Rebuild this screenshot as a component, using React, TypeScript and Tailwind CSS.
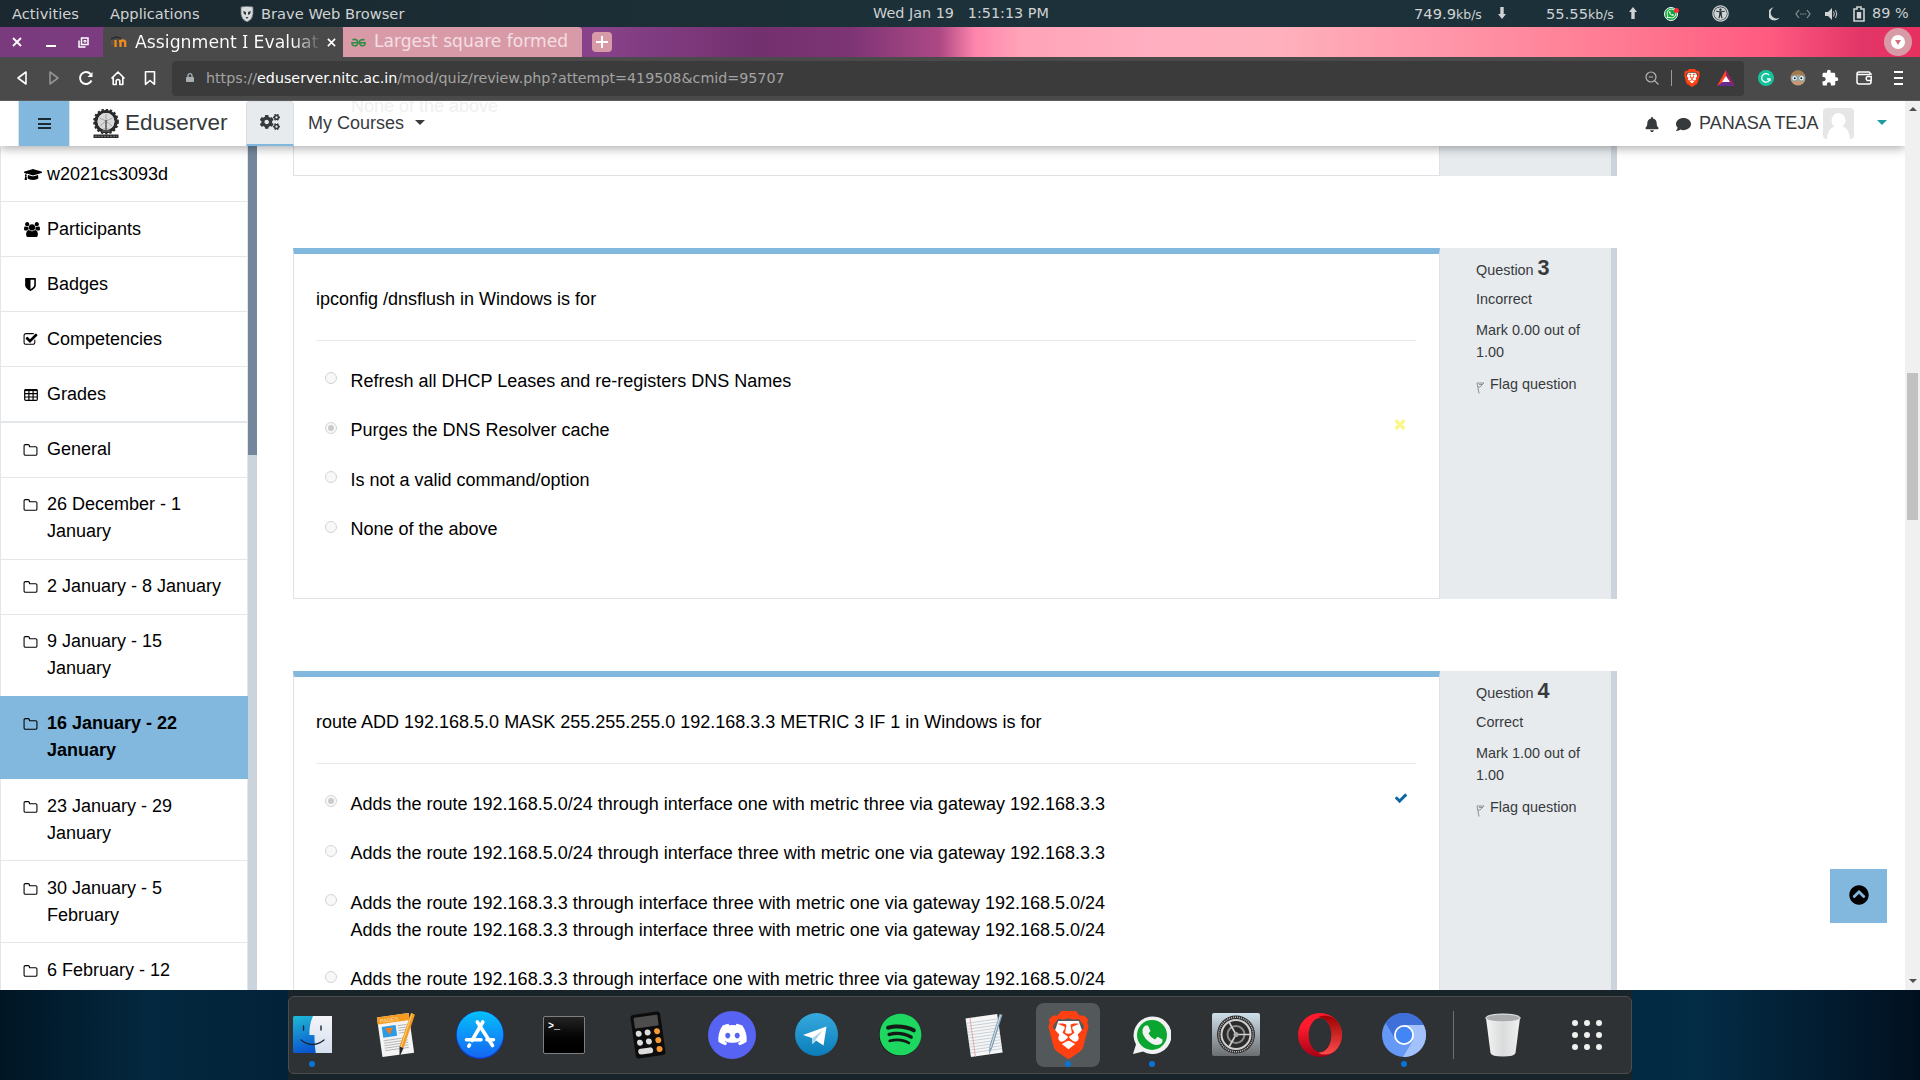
import type { ReactNode } from "react";
import {
  FaBell,
  FaChevronCircleUp,
  FaCogs,
  FaComment,
  FaDiscord,
  FaGraduationCap,
  FaLock,
  FaSpotify,
  FaUniversalAccess,
  FaWhatsapp,
} from "react-icons/fa";
import { MdExtension } from "react-icons/md";
import { SiBrave } from "react-icons/si";

/* ---------- small shared icons ---------- */

const FOLDER =
  "M1600 1312v-704q0-40-28-68t-68-28h-704q-40 0-68-28t-28-68v-64q0-40-28-68t-68-28h-320q-40 0-68 28t-28 68v960q0 40 28 68t68 28h1216q40 0 68-28t28-68zm128-704v704q0 92-66 158t-158 66h-1216q-92 0-158-66t-66-158v-960q0-92 66-158t158-66h320q92 0 158 66t66 158v32h672q92 0 158 66t66 158z";
const SHIELD =
  "M1344 960v-640h-448v1137q119-63 213-137 235-184 235-360zm192-768v768q0 86-33.5 170.5t-83 150-118 127.5-126.5 103-121 77.5-89.5 49.5-42.5 20q-12 6-26 6t-26-6q-16-7-42.5-20t-89.5-49.5-121-77.5-126.5-103-118-127.5-83-150-33.5-170.5v-768q0-26 19-45t45-19h1152q26 0 45 19t19 45z";
const CHECKBOX =
  "M1472 930v318q0 119-84.5 203.5t-203.5 84.5h-832q-119 0-203.5-84.5t-84.5-203.5v-832q0-119 84.5-203.5t203.5-84.5h832q63 0 117 25 15 7 18 23 3 17-9 29l-49 49q-10 10-23 10-3 0-9-2-23-6-45-6h-832q-66 0-113 47t-47 113v832q0 66 47 113t113 47h832q66 0 113-47t47-113v-254q0-13 9-22l64-64q10-10 23-10 6 0 12 3 20 8 20 29zm231-489l-814 814q-24 24-57 24t-57-24l-430-430q-24-24-24-57t24-57l110-110q24-24 57-24t57 24l263 263 647-647q24-24 57-24t57 24l110 110q24 24 24 57t-24 57z";
const CROSS =
  "M1490 1322q0 40-28 68l-136 136q-28 28-68 28t-68-28l-294-294-294 294q-28 28-68 28t-68-28l-136-136q-28-28-28-68t28-68l294-294-294-294q-28-28-28-68t28-68l136-136q28-28 68-28t68 28l294 294 294-294q28-28 68-28t68 28l136 136q28 28 28 68t-28 68l-294 294 294 294q28 28 28 68z";
const TICK =
  "M1671 566q0 40-28 68l-724 724-136 136q-28 28-68 28t-68-28l-136-136-362-362q-28-28-28-68t28-68l136-136q28-28 68-28t68 28l294 295 656-657q28-28 68-28t68 28l136 136q28 28 28 68z";
const PEOPLE =
  "M593 896q-162 5-265 128h-134q-82 0-138-40.5t-56-118.5q0-353 124-353 6 0 43.5 21t97.5 42.5 119 21.5q67 0 133-23-5 37-5 66 0 139 81 256zm1071 637q0 120-73 189.5t-194 69.5h-874q-121 0-194-69.5t-73-189.5q0-53 3.5-103.5t14-109 26.5-108.5 43-97.5 62-81 85.5-53.5 111.5-20q10 0 43 21.5t73 48 107 48 135 21.5 135-21.5 107-48 73-48 43-21.5q61 0 111.5 20t85.5 53.5 62 81 43 97.5 26.5 108.5 14 109 3.5 103.5zm-1024-1277q0 106-75 181t-181 75-181-75-75-181 75-181 181-75 181 75 75 181zm704 384q0 159-112.5 271.5t-271.5 112.5-271.5-112.5-112.5-271.5 112.5-271.5 271.5-112.5 271.5 112.5 112.5 271.5zm576 225q0 78-56 118.5t-138 40.5h-134q-103-123-265-128 81-117 81-256 0-29-5-66 66 23 133 23 59 0 119-21.5t97.5-42.5 43.5-21q124 0 124 353zm-128-609q0 106-75 181t-181 75-181-75-75-181 75-181 181-75 181 75 75 181z";

function Glyph({ d, className = "size-4" }: { d: string; className?: string }) {
  return (
    <svg viewBox="0 0 1792 1792" className={className} fill="currentColor">
      <path d={d} />
    </svg>
  );
}

function PeopleIcon() {
  return (
    <svg viewBox="0 0 1920 1792" className="h-[15px] w-4" fill="currentColor">
      <path d={PEOPLE} />
    </svg>
  );
}

function TableIcon() {
  return (
    <svg viewBox="0 0 14 12" className="h-[12px] w-[14px]" fill="none" stroke="currentColor" strokeWidth="1.2">
      <rect x="0.7" y="0.7" width="12.6" height="10.6" rx="1" />
      <path d="M0.7 1.3h12.6" strokeWidth="1.6" />
      <path d="M0.7 4.6h12.6M0.7 8h12.6M4.9 1v10.4M9.1 1v10.4" />
    </svg>
  );
}

/* ---------- desktop panel ---------- */

function TopPanel() {
  return (
    <div className="flex h-[27px] shrink-0 items-center bg-linear-to-r from-[#1b282f] via-[#1c3139] to-[#1b3038] text-[14.67px] whitespace-pre text-[#d0d2d3]">
      <span className="ml-3 w-[98px]">Activities</span>
      <span className="w-[130px]">Applications</span>
      <svg viewBox="0 0 14 16" className="mr-[7px] h-4 w-[14px]">
        <path d="M1 1q6-1.500 12 0v7q0 5-6 8-6-3-6-8z" fill="#d9dbdc" stroke="#6b7478" strokeWidth=".8" />
        <path d="M3 5l3 1v3L4 8zM11 5L8 6v3l2-1zM5.500 11h3L7 13z" fill="#2d3a41" />
      </svg>
      <span className="w-[612px]">Brave Web Browser</span>
      <span className="w-[541px] text-[14.4px]">Wed Jan 19   1:51:13 PM</span>
      <span className="w-[84px]">
        749.9<span className="text-[12.5px]">kb/s</span>
      </span>
      <svg viewBox="0 0 8 12" className="mr-[40px] mb-px h-3 w-2" fill="currentColor">
        <path d="M2.300 0h3.400v7H8l-4 5-4-5h2.300z" />
      </svg>
      <span className="w-[83px]">
        55.55<span className="text-[12.5px]">kb/s</span>
      </span>
      <svg viewBox="0 0 8 12" className="mr-[27px] mb-px h-3 w-2" fill="currentColor">
        <path d="M2.300 12h3.400V5H8L4 0 0 5h2.300z" />
      </svg>
      <span className="relative mr-[34px] flex size-[14px] items-center justify-center rounded-full border border-white bg-[#12a63a]">
        <FaWhatsapp className="size-[11px] text-white" />
        <span className="absolute top-0 -right-0.5 size-[5px] rounded-full bg-red-500" />
      </span>
      <FaUniversalAccess className="mr-[40px] size-[17px]" />
      <svg viewBox="0 0 12 14" className="mr-[15px] h-[14px] w-[11px]" fill="currentColor">
        <path d="M5 0a7 7 0 1 0 6.5 11A6.2 6.2 0 0 1 5 0z" />
      </svg>
      <svg viewBox="0 0 16 10" className="mr-[14px] h-[10px] w-4" fill="none" stroke="#8b9498" strokeWidth="1.2">
        <path d="M4 1L1 5l3 4M12 1l3 4-3 4M5 5h1.5M7.3 5h1.5M9.6 5h1.5" />
      </svg>
      <svg viewBox="0 0 13 12" className="mr-[15px] h-[12px] w-[13px]" fill="currentColor">
        <path d="M0 4h3l4-4v12l-4-4h-3z" />
        <path d="M8.5 3.5q1.6 2.5 0 5M10.5 2q2.6 4 0 8" fill="none" stroke="currentColor" />
      </svg>
      <svg viewBox="0 0 12 16" className="mr-[7px] h-4 w-3" fill="none" stroke="currentColor" strokeWidth="1.6">
        <path d="M1 3h3V1h4v2h3v12H1z" />
        <path d="M3.8 6h4.4v6.5H3.8z" fill="currentColor" stroke="none" />
      </svg>
      <span className="text-[14.4px]">89 %</span>
    </div>
  );
}

/* ---------- browser chrome ---------- */

function TabStrip() {
  return (
    <div className="flex h-[30px] shrink-0 bg-[linear-gradient(90deg,#7a3a7e_0px,#874289_600px,#73306f_760px,#7d3475_850px,#ad4985_940px,#ff85ac_975px,#ffa3b8_1020px,#ffafc1_1150px,#ffb0bc_1280px,#ff95a8_1450px,#ff7a92_1620px,#ff5a80_1770px,#e23668_1860px,#e8305f_1920px)]">
      <div className="flex w-[103px] items-center text-white">
        <svg viewBox="0 0 10 10" className="ml-3 size-[10px]" stroke="currentColor" strokeWidth="1.8">
          <path d="M1 1l8 8M9 1L1 9" />
        </svg>
        <div className="mt-2 ml-6 h-[2px] w-[10px] bg-white" />
        <svg viewBox="0 0 11 11" className="ml-[22px] size-[11px]" fill="none" stroke="currentColor" strokeWidth="1.5">
          <path d="M3.500 1h6.500v6.500h-6.500zM1 3.500v6.500h6.500" />
          <path d="M6 3.500h2v1.500h-2z" strokeWidth="1" />
        </svg>
      </div>
      <div className="flex w-[240px] items-center rounded-t-sm bg-[#4a4a4a] pl-[8px]">
        <svg viewBox="0 0 16 12" className="h-[12px] w-4" fill="none">
          <path d="M0 3l5-2 5 1" stroke="#2b2b2b" strokeWidth="1.4" />
          <path d="M1 4v5" stroke="#8a5a35" />
          <path d="M4.500 11V4M9.500 11V6.500q0-1.500-1.500-1.500M9.500 6.500q0-2 2.300-2t2.400 2V11" stroke="#f08a1d" strokeWidth="2.300" />
        </svg>
        <div className="ml-2 w-[184px] bg-linear-to-r from-white from-86% to-white/10 bg-clip-text text-[17.3px] whitespace-pre text-transparent">
          Assignment <span className="font-['Noto_Sans']">I</span> Evaluat
        </div>
        <svg viewBox="0 0 10 10" className="ml-[8px] size-[9px] text-white" stroke="currentColor" strokeWidth="1.8">
          <path d="M1 1l8 8M9 1L1 9" />
        </svg>
      </div>
      <div className="flex w-[239px] items-center rounded-tr-sm bg-[#d99aa7] pl-2">
        <svg viewBox="0 0 16 9" className="h-[9px] w-[15px]" fill="none" stroke="#2f8d46" strokeWidth="1.7">
          <path d="M1.500 1.500Q7 .2 7 4.500T3.800 8Q1 8 1 4.800h14Q15 8 12.200 8T9 4.500t5.500-3" />
        </svg>
        <div className="ml-2 text-[17.1px] whitespace-pre text-[#f3dfe3]">Largest square formed</div>
      </div>
      <div className="mt-[5px] ml-[10px] flex size-5 items-center justify-center rounded-sm bg-[#d99aa7]">
        <svg viewBox="0 0 12 12" className="size-3" stroke="white" strokeWidth="2">
          <path d="M6 0v12M0 6h12" />
        </svg>
      </div>
      <div className="mt-[1px] mr-[8px] ml-auto flex size-7 items-center justify-center rounded-full bg-[#d99aa7]">
        <div className="flex size-[14px] items-center justify-center rounded-full bg-white">
          <svg viewBox="0 0 6 5" className="h-[5px] w-[6px]" fill="#d0707f">
            <path d="M0 0h6l-3 5z" />
          </svg>
        </div>
      </div>
    </div>
  );
}

function NavIcon({ children, dim }: { children: ReactNode; dim?: boolean }) {
  return (
    <div className={dim ? "flex w-8 justify-center text-[#929292]" : "flex w-8 justify-center text-white"}>
      <svg viewBox="0 0 16 16" className="size-4" fill="none" stroke="currentColor" strokeWidth="1.6" strokeLinejoin="round">
        {children}
      </svg>
    </div>
  );
}

function Toolbar() {
  return (
    <div className="flex h-11 shrink-0 items-center border-b border-[#5c5c5c] bg-[#4a4a4a] pb-px pl-1.5">
      <NavIcon>
        <path d="M12 2v12L4 8z" />
      </NavIcon>
      <NavIcon dim>
        <path d="M4 2v12l8-6z" />
      </NavIcon>
      <NavIcon>
        <path d="M13.500 10.500A6 6 0 1 1 12.500 4" strokeWidth="1.900" />
        <path d="M14.500 2v5h-5z" fill="currentColor" stroke="none" />
      </NavIcon>
      <NavIcon>
        <path d="M1.500 8.500L8 2l6.500 6.500M3.200 7.500v7h3v-4q1.800-2 3.600 0v4h3v-7" />
      </NavIcon>
      <NavIcon>
        <path d="M3.500 1.800h9v12.500L8 10.500l-4.500 3.800z" />
      </NavIcon>
      <div className="ml-[6px] flex h-[35px] w-[1572px] items-center rounded-sm bg-[#3b3b3b] pl-[14px]">
        <FaLock className="mb-px h-[11px] w-[8px] text-[#a9b0b4]" />
        <div className="ml-3 pt-px text-[14.25px] text-[#a3a3a3]">
          https://<span className="text-white">eduserver.nitc.ac.in</span>/mod/quiz/review.php?attempt=419508&amp;cmid=95707
        </div>
        <svg viewBox="0 0 14 14" className="ml-auto size-[14px]" fill="none" stroke="#b5b5b5" strokeWidth="1.2">
          <circle cx="6" cy="6" r="5" />
          <path d="M9.600 9.600L13.500 13.500M3.800 6h4.400" />
        </svg>
        <div className="mr-3 ml-[12px] h-4 w-px bg-[#9a9a9a]" />
        <div className="mr-[17px]">
          <BraveLion className="h-[18px] w-4" />
        </div>
        <svg viewBox="0 0 18 16" className="mr-[9px] h-4 w-[18px]">
          <path d="M9 0L0 16l9-5z" fill="#ff4724" />
          <path d="M9 0l9 16-9-5z" fill="#9e1f63" />
          <path d="M0 16h18l-9-6z" fill="#662d91" />
          <path d="M9 6l4 6H5z" fill="white" />
        </svg>
      </div>
      <div className="ml-[14px] flex size-4 items-center justify-center rounded-full bg-[#15c39a]">
        <svg viewBox="0 0 10 10" className="size-[10px]" fill="none" stroke="white" strokeWidth="1.3">
          <path d="M8 2A4.200 4.200 0 1 0 9 6H6M9 5.500V8" />
        </svg>
      </div>
      <svg viewBox="0 0 16 16" className="ml-4 size-4">
        <circle cx="8" cy="8" r="7.500" fill="#c69a76" />
        <path d="M1.500 6Q2 .5 8 .5T14.500 6Q8 3 1.500 6z" fill="#a37a4c" />
        <circle cx="4.500" cy="8.200" r="2.800" fill="#e8f6fb" stroke="#6e9dac" />
        <circle cx="11.500" cy="8.200" r="2.800" fill="#e8f6fb" stroke="#6e9dac" />
        <circle cx="4.700" cy="8.300" r="1" fill="#222" />
        <circle cx="11.300" cy="8.300" r="1" fill="#222" />
      </svg>
      <MdExtension className="ml-[15px] size-[18px] text-white" />
      <svg viewBox="0 0 16 14" className="ml-[17px] h-[14px] w-4" fill="none" stroke="white" strokeWidth="1.5">
        <path d="M15 4V3L13 1H3Q1 1 1 3v8q0 2 2 2h10q2 0 2-2v-1M1 3.500h13" />
        <path d="M15.200 5.500v4h-4q-2-2 0-4z" />
      </svg>
      <div className="ml-[22px] flex flex-col gap-[4px]">
        <div className="h-[2px] w-[9px] bg-white" />
        <div className="h-[2px] w-[9px] bg-white" />
        <div className="h-[2px] w-[9px] bg-white" />
      </div>
    </div>
  );
}

function BraveLion({ className }: { className: string }) {
  return (
    <svg viewBox="0 0 24 24" className={className} preserveAspectRatio="none">
      <path d="M6 5h12l2 5-3 8-5 4-5-4-3-8z" fill="white" />
      <svg x="-1.800" y="0" width="27.600" height="24" preserveAspectRatio="none" viewBox="0 0 24 24">
        <SiBrave size={24} color="#ff4112" />
      </svg>
    </svg>
  );
}

/* ---------- site header ---------- */

function CollegeLogo() {
  return (
    <svg viewBox="0 0 26 30" className="h-[30px] w-[26px]" fill="none">
      <circle cx="13" cy="12.500" r="10" stroke="#2a2a2a" strokeWidth="3.200" />
      <circle cx="13" cy="12.500" r="12" stroke="#2a2a2a" strokeWidth="1.800" strokeDasharray="2.400 1.900" />
      <circle cx="13" cy="12.500" r="8.500" fill="#d9d9d9" />
      <path d="M13 5v15M6.500 9L13 12l6.500-3M7 17l6-5 6 5M10 20h6" stroke="#a5a5a5" strokeWidth="1" />
      <path d="M13 11v11M9 22h8" stroke="#555" strokeWidth="1.400" />
      <path d="M0.500 25.500h25v3.500h-25z" fill="#2d2d2d" />
      <path d="M2 27.300h22" stroke="#8c8c8c" strokeWidth=".8" strokeDasharray="2 1" />
    </svg>
  );
}

function SiteHeader() {
  return (
    <header className="relative z-10 flex h-[45px] w-[1905px] shrink-0 items-center bg-white/95 text-[18px] text-[#373a3c] shadow-[0_2px_10px_rgba(0,0,0,0.35)]">
      <div className="ml-[18px] flex h-full w-[52px] items-center justify-center border-x border-[#dfe4e8] bg-[#82b7de]">
        <div className="flex flex-col gap-[2.5px]">
          <div className="h-[2px] w-[13px] bg-[#1c2a33]" />
          <div className="h-[2px] w-[13px] bg-[#1c2a33]" />
          <div className="h-[2px] w-[13px] bg-[#1c2a33]" />
        </div>
      </div>
      <div className="ml-[23px] flex w-[153px] items-center gap-[6px] pt-px">
        <CollegeLogo />
        <span className="-mt-[3px] text-[22.5px]">Eduserver</span>
      </div>
      <div className="flex h-full w-12 items-center justify-center rounded-t-sm border border-b-2 border-[#d9dee3] border-b-[#82b7de] bg-[#e7ebee]">
        <FaCogs className="-mt-[3px] size-[20px]" />
      </div>
      <div className="ml-[14px] flex items-center pb-px">
        <span>My Courses</span>
        <svg viewBox="0 0 10 5" className="mb-0.5 ml-[11px] h-[5px] w-[10px]" fill="currentColor">
          <path d="M0 0h10L5 5z" />
        </svg>
      </div>
      <div className="mr-[18px] ml-auto flex items-center pb-px">
        <FaBell className="mt-[2px] h-[15px] w-[14px]" />
        <FaComment className="mt-[3px] ml-[17px] size-[15px]" />
        <span className="ml-2 w-[124px]">PANASA TEJA</span>
        <svg viewBox="0 0 31 31" className="mt-px size-[31px] rounded-sm bg-[#e6e6e6]" fill="white">
          <ellipse cx="15.500" cy="12.500" rx="7" ry="7.500" />
          <path d="M4 31q1-12 9-13h5q8 1 9 13z" />
        </svg>
        <svg viewBox="0 0 10 5" className="mb-0.5 ml-[23px] h-[5px] w-[10px]" fill="#1c9c9f">
          <path d="M0 0h10L5 5z" />
        </svg>
      </div>
      <div className="absolute top-[-8px] left-[351px] -z-10 text-[18px] leading-[27px] text-[#f0f0f0]">None of the above</div>
    </header>
  );
}

/* ---------- sidebar ---------- */

function SideItem({ icon, lines, active }: { icon: ReactNode; lines: string[]; active?: boolean }) {
  return (
    <li
      className={
        active
          ? "-mt-px flex border-b border-[#82b7de] bg-[#82b7de] pt-[14px] pb-[14px] pl-[23px] font-bold"
          : "flex border-r border-b border-l border-[#e3e7ea] pt-[13px] pb-[14px] pl-[22px]"
      }
    >
      <span className="flex h-[27px] w-[24px] items-center">{icon}</span>
      <span>
        {lines.map((line) => (
          <span key={line} className="block">
            {line}
          </span>
        ))}
      </span>
    </li>
  );
}

const folder = <Glyph d={FOLDER} className="mt-px size-[15px]" />;

function Sidebar() {
  return (
    <aside className="flex h-full w-[257px] shrink-0 overflow-hidden">
      <div className="w-[248px] text-[18px] leading-[27px] text-black">
        <ul className="mt-px [&>li]:pt-[14px] [&>li]:pb-[13px]">
          <SideItem icon={<FaGraduationCap className="ml-px h-[17px] w-[18px]" />} lines={["w2021cs3093d"]} />
          <SideItem icon={<span className="ml-px"><PeopleIcon /></span>} lines={["Participants"]} />
          <SideItem icon={<Glyph d={SHIELD} className="size-[15px]" />} lines={["Badges"]} />
          <SideItem icon={<Glyph d={CHECKBOX} className="size-[15px]" />} lines={["Competencies"]} />
          <SideItem icon={<span className="ml-px"><TableIcon /></span>} lines={["Grades"]} />
        </ul>
        <ul className="border-t border-[#e3e7ea]">
          <SideItem icon={folder} lines={["General"]} />
          <SideItem icon={folder} lines={["26 December - 1", "January"]} />
          <SideItem icon={folder} lines={["2 January - 8 January"]} />
          <SideItem icon={folder} lines={["9 January - 15", "January"]} />
          <SideItem icon={folder} lines={["16 January - 22", "January"]} active />
        </ul>
        <ul className="[&>li]:pt-[14px] [&>li]:pb-[13px]">
          <SideItem icon={folder} lines={["23 January - 29", "January"]} />
          <SideItem icon={folder} lines={["30 January - 5", "February"]} />
          <SideItem icon={folder} lines={["6 February - 12", "February"]} />
        </ul>
      </div>
      <div className="w-[9px] bg-[#cbd3dc]">
        <div className="h-[309px] bg-[#73869b]" />
      </div>
    </aside>
  );
}

/* ---------- quiz questions ---------- */

type Option = { lines: string[]; chosen?: boolean; mark?: "right" | "wrong" };

function Radio({ chosen }: { chosen?: boolean }) {
  return (
    <span className="mt-[4.5px] flex size-[12px] items-center justify-center rounded-full border border-[#d4d4d4] bg-[#f8f8f8]">
      {chosen && <span className="size-[6px] rounded-full bg-[#cbcbcb]" />}
    </span>
  );
}

function Question({
  number,
  state,
  mark,
  text,
  options,
}: {
  number: number;
  state: string;
  mark: string;
  text: string;
  options: Option[];
}) {
  return (
    <section className="mb-[72.3px] flex min-h-[351px] w-[1324px]">
      <div className="w-[1147px] border border-t-[6px] border-[#dee2e6] border-t-[#82b7de] px-[22px] pt-[31.5px] text-black">
        <p>{text}</p>
        <div className="mt-[27px] w-[1100px] border-t border-[#e6e8ea] pt-[27px]">
          {options.map((option, index) => (
            <div key={index} className="mb-[22.5px] flex pl-[8.5px]">
              <Radio chosen={option.chosen} />
              <div className="ml-[14px] flex-1">
                {option.lines.map((line, i) => (
                  <p key={i}>{line}</p>
                ))}
              </div>
              {option.mark === "wrong" && <Glyph d={CROSS} className="-mt-px mr-[8px] size-[16px] text-[#fcf78d]" />}
              {option.mark === "right" && <Glyph d={TICK} className="mr-[8px] size-[14px] text-[#0f66a5]" />}
            </div>
          ))}
        </div>
      </div>
      <aside className="w-[177px] border-r-[6px] border-[#cdd3dc] bg-[#e7ebee] pl-[36px] text-[14.4px] leading-[21.6px] text-[#373a3c]">
        <h3 className="mt-[6px] h-[30px] leading-[27px]">
          Question <span className="text-[21.6px] font-bold">{number}</span>
        </h3>
        <p className="mt-[5px]">{state}</p>
        <p className="mt-[9.6px] w-[115px]">{mark}</p>
        <div className="mt-[10.8px] flex">
          <svg viewBox="0 0 10 12" className="mt-[8px] mr-1 h-[12px] w-[10px]" fill="none" stroke="#8d9194">
            <path d="M1 1l2 10.500M1 1h7L4 5H2M3 2.500h3" />
          </svg>
          Flag question
        </div>
      </aside>
    </section>
  );
}

const questionThree: Option[] = [
  { lines: ["Refresh all DHCP Leases and re-registers DNS Names"] },
  { lines: ["Purges the DNS Resolver cache"], chosen: true, mark: "wrong" },
  { lines: ["Is not a valid command/option"] },
  { lines: ["None of the above"] },
];

const questionFour: Option[] = [
  {
    lines: ["Adds the route 192.168.5.0/24 through interface one with metric three via gateway 192.168.3.3"],
    chosen: true,
    mark: "right",
  },
  { lines: ["Adds the route 192.168.5.0/24 through interface three with metric one via gateway 192.168.3.3"] },
  {
    lines: [
      "Adds the route 192.168.3.3 through interface three with metric one via gateway 192.168.5.0/24",
      "Adds the route 192.168.3.3 through interface three with metric one via gateway 192.168.5.0/24",
    ],
  },
  { lines: ["Adds the route 192.168.3.3 through interface one with metric three via gateway 192.168.5.0/24"] },
];

function Page() {
  return (
    <div className="flex h-[889px] shrink-0 bg-white font-['Liberation_Sans',Arial,sans-serif]">
      <div className="relative flex w-[1905px] flex-col overflow-hidden">
        <SiteHeader />
        <div className="flex h-[844px]">
          <Sidebar />
          <main className="ml-9 h-[844px] w-[1324px] overflow-hidden text-[18px] leading-[27px]">
            <div className="mb-[72px] flex h-[30px]">
              <div className="w-[1147px] border border-t-0 border-[#dee2e6]" />
              <div className="w-[177px] border-r-[6px] border-[#cdd3dc] bg-[#e7ebee]" />
            </div>
            <Question
              number={3}
              state="Incorrect"
              mark="Mark 0.00 out of 1.00"
              text="ipconfig /dnsflush in Windows is for"
              options={questionThree}
            />
            <Question
              number={4}
              state="Correct"
              mark="Mark 1.00 out of 1.00"
              text="route ADD 192.168.5.0 MASK 255.255.255.0 192.168.3.3 METRIC 3 IF 1 in Windows is for"
              options={questionFour}
            />
          </main>
        </div>
        <div className="absolute right-[18px] bottom-[67px] flex h-[54px] w-[57px] items-center justify-center bg-[#82b7de] pb-0.5 text-black">
          <FaChevronCircleUp className="size-[20px]" />
        </div>
      </div>
      <div className="flex w-[15px] flex-col items-center bg-[#f0f0f0]">
        <svg viewBox="0 0 8 4" className="mt-[6px] h-1 w-2" fill="#505050">
          <path d="M0 4h8L4 0z" />
        </svg>
        <div className="mt-[262px] h-[147px] w-[11px] bg-[#c1c1c1]" />
        <svg viewBox="0 0 8 4" className="mt-auto mb-[7px] h-1 w-2" fill="#505050">
          <path d="M0 0h8L4 4z" />
        </svg>
      </div>
    </div>
  );
}

/* ---------- dock ---------- */

function FinderIcon() {
  return (
    <svg viewBox="0 0 39 37" className="h-[37px] w-[39px]">
      <defs>
        <linearGradient id="finderL" x1="0" y1="0" x2="0.3" y2="1">
          <stop offset="0" stopColor="#1fb9d6" />
          <stop offset="1" stopColor="#0a55d0" />
        </linearGradient>
        <linearGradient id="finderR" x1="0" y1="0" x2="0" y2="1">
          <stop offset="0" stopColor="#f4f4f8" />
          <stop offset="1" stopColor="#d5e0ee" />
        </linearGradient>
      </defs>
      <rect width="39" height="37" rx="1.500" fill="url(#finderL)" />
      <path d="M20 0q-4 9-3.600 19h5q0 9 1.300 18H39V0z" fill="url(#finderR)" />
      <path d="M10.500 10v4M28 10v4M8 24q11.500 9 23 0" fill="none" stroke="#17283c" strokeWidth="1.400" strokeLinecap="round" />
    </svg>
  );
}

function PagesIcon() {
  return (
    <svg viewBox="0 0 40 46" className="h-[46px] w-[40px]">
      <g transform="rotate(-8 20 23)">
        <rect x="3.500" y="3" width="32" height="40" fill="#f4f4f4" />
        <rect x="3.500" y="3" width="32" height="7" fill="#f39a1f" />
        <text x="6" y="9" fontSize="5.500" fill="#fbe3bd" fontFamily="Liberation Sans">
          PAGES
        </text>
        <rect x="7" y="13" width="14" height="11" fill="#2b9be8" />
        <path d="M10 15h8l-4 7z" fill="#ef7d1d" />
        <path d="M23 14h9M23 16.500h9M23 19h9M23 21.500h9M7 27h24M7 29.500h24M7 32h24M7 34.500h24M7 37h24" stroke="#aaa" strokeWidth=".8" />
      </g>
      <path d="M35 1l4 1.500L27.500 36l-4-1.500z" fill="#f39a1f" />
      <path d="M36 1.500L25 35" stroke="#ffd08a" strokeWidth="1" />
      <path d="M23.500 34.500l4 1.500-4 9z" fill="#2a2a2a" />
    </svg>
  );
}

function AppStoreIcon() {
  return (
    <svg viewBox="0 0 48 48" className="size-12">
      <defs>
        <linearGradient id="store" x1="0" y1="0" x2="0" y2="1">
          <stop offset="0" stopColor="#05c0fb" />
          <stop offset="1" stopColor="#1566f2" />
        </linearGradient>
      </defs>
      <circle cx="24" cy="24" r="24" fill="#0d3fd1" />
      <circle cx="24" cy="23.500" r="23.200" fill="url(#store)" />
      <g stroke="white" strokeWidth="3.600" strokeLinecap="round">
        <path d="M26.800 11L16 29.500M13.500 34l-.7 1.200M21.300 11L36.500 34.500M10.500 28.800h14.500M31 28.800h6.500" />
      </g>
    </svg>
  );
}

function TerminalIcon() {
  return (
    <div className="h-[38px] w-[42px] rounded-[2px] border border-[#7d7f80] bg-linear-to-b from-[#242424] to-black pt-[5px] pl-1 font-['Liberation_Mono',monospace] text-[10px] leading-[10px] font-bold text-white">
      &gt;_
    </div>
  );
}

function CalculatorIcon() {
  const keys = [0, 1, 2, 3];
  return (
    <svg viewBox="0 0 36 48" className="h-12 w-9">
      <g transform="rotate(-8 18 24)">
        <rect x="3" y="2" width="30" height="44" rx="3" fill="#0c0c0c" />
        <rect x="6" y="5" width="24" height="11" rx="1" fill="#4d4d4d" />
        {keys.map((k) => (
          <circle key={k} cx={9 + (k % 2) * 9} cy={k < 2 ? 21.5 : 30.5} r="3" fill="#ddd" />
        ))}
        <circle cx="27.500" cy="21.500" r="3" fill="#f59a35" />
        <circle cx="27.500" cy="30.500" r="3" fill="#f59a35" />
        <circle cx="27.500" cy="39.500" r="3" fill="#f59a35" />
        <rect x="6" y="36.500" width="15" height="6" rx="3" fill="#ddd" />
      </g>
    </svg>
  );
}

function TelegramIcon() {
  return (
    <svg viewBox="0 0 43 43" className="size-[43px]">
      <defs>
        <linearGradient id="tg" x1="0" y1="0" x2="0" y2="1">
          <stop offset="0" stopColor="#36aade" />
          <stop offset="1" stopColor="#0a7dba" />
        </linearGradient>
      </defs>
      <circle cx="21.500" cy="21.500" r="21.500" fill="url(#tg)" />
      <path d="M8 22L31.500 13.500 28.500 32.500 21 27.500l-3.500 3.500-.5-6z" fill="white" />
      <path d="M17 25.500L27.500 17.500 20.500 27l-3.200 3.800z" fill="#a9d3ea" />
    </svg>
  );
}

function NotesIcon() {
  return (
    <svg viewBox="0 0 40 46" className="h-[46px] w-[40px]">
      <g transform="rotate(-8 20 23)">
        <rect x="4" y="4" width="32" height="39" fill="#f6f6f6" />
        <path d="M4 9h32M4 12h32M4 15h32M4 18h32M4 21h32M4 24h32M4 27h32M4 30h32M4 33h32M4 36h32M4 39h32" stroke="#b9c3cc" strokeWidth=".7" />
        <path d="M8.500 4v39" stroke="#e79c9c" strokeWidth=".8" />
      </g>
      <path d="M35.500 2l3 .8L28.500 35l-3.500 8 .5-9z" fill="#7e9bb0" />
      <path d="M36.500 3L26.500 36" stroke="#d6e6f0" strokeWidth="1" />
    </svg>
  );
}

function WhatsAppIcon() {
  return (
    <svg viewBox="0 0 38 38" className="size-[38px]">
      <path d="M0 38l3-9.500A19 18.800 0 1 1 10 35.500z" fill="#f2f2f2" />
      <circle cx="19" cy="19" r="15" fill="#0aa62f" />
      <path d="M12.500 9.500h2.500l2.500 5.500-2 2.500q2 4 6.500 6l2.500-2.800 5 2.800q.5 5-5.500 5.500-5 0-10-5t-4.500-10q.5-3.500 3-4.500z" fill="#f2f2f2" />
    </svg>
  );
}

function SettingsIcon() {
  return (
    <svg viewBox="0 0 48 43" className="h-[43px] w-12" fill="none">
      <defs>
        <linearGradient id="prefs" x1="0" y1="0" x2="0" y2="1">
          <stop offset="0" stopColor="#cfdfe9" />
          <stop offset="1" stopColor="#6c6f71" />
        </linearGradient>
      </defs>
      <rect width="48" height="43" rx="2" fill="url(#prefs)" />
      <circle cx="24" cy="21.500" r="19" fill="#2b2b2b" />
      <circle cx="24" cy="21.500" r="17.300" stroke="#bfbfbf" strokeWidth="1.500" strokeDasharray="1 1" />
      <circle cx="24" cy="21.500" r="14.500" stroke="#cfcfcf" strokeWidth="2" />
      <circle cx="24" cy="21.500" r="8.500" stroke="#8c8c8c" strokeWidth="2" />
      <path d="M24 21.500h14.500M24 21.500L17 9M24 21.500L17 34" stroke="#d0d0d0" strokeWidth="1.600" />
      <circle cx="24" cy="21.500" r="2.500" fill="#aaa" />
    </svg>
  );
}

function OperaIcon() {
  return (
    <svg viewBox="0 0 44 44" className="size-11">
      <defs>
        <linearGradient id="opA" x1="0" y1="0" x2="0" y2="1">
          <stop offset="0.3" stopColor="#ff1b2d" />
          <stop offset="1" stopColor="#a70014" />
        </linearGradient>
        <linearGradient id="opB" x1="0" y1="0" x2="0" y2="1">
          <stop offset="0" stopColor="#9c0000" />
          <stop offset="1" stopColor="#ff4b4b" />
        </linearGradient>
      </defs>
      <circle cx="22" cy="22" r="22" fill="url(#opA)" />
      <path d="M20 4q9-4 17 2a22 22 0 0 1 0 32q-8 6-17 2 13-2 13-18T20 4z" fill="url(#opB)" />
      <ellipse cx="22" cy="22" rx="11.300" ry="17" fill="#2e3234" />
    </svg>
  );
}

function ChromiumIcon() {
  return (
    <svg viewBox="0 0 44 44" className="size-11">
      <circle cx="22" cy="22" r="22" fill="#6699f6" />
      <path d="M22 12h19.600A22 22 0 0 1 21 44l10-16.500z" fill="#a3c2fb" />
      <path d="M3.500 10A22 22 0 0 1 41.600 12H22L12 24z" fill="#3f6fd8" />
      <circle cx="22" cy="22" r="10" fill="white" />
      <circle cx="22" cy="22" r="8.200" fill="#4285f4" />
    </svg>
  );
}

function TrashIcon() {
  return (
    <svg viewBox="0 0 36 44" className="h-11 w-9">
      <defs>
        <linearGradient id="bin" x1="0" y1="0" x2="1" y2="0">
          <stop offset="0" stopColor="#f4f4f4" />
          <stop offset="0.5" stopColor="#d9dadb" />
          <stop offset="1" stopColor="#f0f0f0" />
        </linearGradient>
      </defs>
      <path d="M1 5l4.500 35q1 3.500 12.500 3.500T30.500 40L35 5z" fill="url(#bin)" />
      <ellipse cx="18" cy="5" rx="17.300" ry="4" fill="#a9abac" stroke="#eee" strokeWidth="1" />
    </svg>
  );
}

function DockItem({ children, running, active }: { children: ReactNode; running?: boolean; active?: boolean }) {
  return (
    <div className="relative flex h-full w-[84px] items-center justify-center">
      <div className={active ? "flex size-16 items-center justify-center rounded-lg bg-[#53585a]" : "flex size-16 items-center justify-center"}>
        {children}
      </div>
      {running && <span className="absolute bottom-[5px] size-[6px] rounded-full bg-[#0a74d6]" />}
    </div>
  );
}

function Dock() {
  return (
    <div className="flex h-[90px] shrink-0 justify-center bg-[linear-gradient(90deg,#001524_0px,#04283f_150px,#022239_288px,#022a42_1640px,#032c45_1700px,#01101f_1920px)]">
      <div className="flex h-[90px] w-[1344px] bg-[#18242a] pt-[6px]">
        <div className="h-[78px] w-[1344px] rounded-md border border-[#4b4d4e] bg-[#2e3234]">
          <div className="-ml-[19px] flex h-[75px] w-[1362px] items-center">
            <DockItem running><FinderIcon /></DockItem>
            <DockItem><PagesIcon /></DockItem>
            <DockItem><AppStoreIcon /></DockItem>
            <DockItem><TerminalIcon /></DockItem>
            <DockItem><CalculatorIcon /></DockItem>
            <DockItem>
              <div className="flex size-12 items-center justify-center rounded-full bg-[#5763f2]">
                <FaDiscord className="size-[31px] text-white" />
              </div>
            </DockItem>
            <DockItem><TelegramIcon /></DockItem>
            <DockItem>
              <div className="flex size-[42px] items-center justify-center rounded-full bg-[#141a16]">
                <FaSpotify className="size-[43px] shrink-0 text-[#1ed760]" />
              </div>
            </DockItem>
            <DockItem><NotesIcon /></DockItem>
            <DockItem running active><BraveLion className="h-12 w-[41px]" /></DockItem>
            <DockItem running><WhatsAppIcon /></DockItem>
            <DockItem><SettingsIcon /></DockItem>
            <DockItem><OperaIcon /></DockItem>
            <DockItem running><ChromiumIcon /></DockItem>
            <div className="flex w-[15px] justify-center">
              <div className="h-12 w-px bg-[#6d7072]" />
            </div>
            <DockItem><TrashIcon /></DockItem>
            <DockItem>
              <div className="grid grid-cols-3 gap-[6px]">
                {[0, 1, 2, 3, 4, 5, 6, 7, 8].map((dot) => (
                  <span key={dot} className="size-[6px] rounded-full bg-[#f0f0ef]" />
                ))}
              </div>
            </DockItem>
          </div>
        </div>
      </div>
    </div>
  );
}

export default function App() {
  return (
    <div className="flex h-[1080px] w-[1920px] flex-col overflow-hidden bg-black font-['DejaVu_Sans',sans-serif]">
      <TopPanel />
      <TabStrip />
      <Toolbar />
      <Page />
      <Dock />
    </div>
  );
}
